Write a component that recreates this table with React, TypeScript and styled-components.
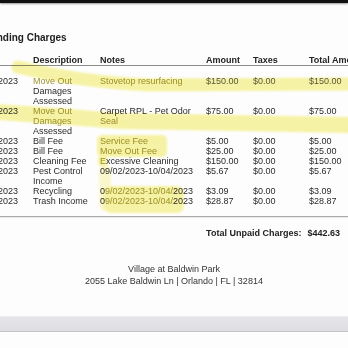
import React from "react";
import styled, { createGlobalStyle } from "styled-components";

type Charge = {
  date: string;
  desc: React.ReactNode;
  notes: React.ReactNode;
  amount: string;
  taxes: string;
  total: string;
  marked?: boolean;
};

const Mark = styled.span`
  color: #a09536;
`;

const charges: Charge[] = [
  {
    date: "10/10/2023",
    desc: (
      <>
        <Mark>Move Out</Mark> Damages Assessed
      </>
    ),
    notes: <Mark>Stovetop resurfacing</Mark>,
    amount: "$150.00",
    taxes: "$0.00",
    total: "$150.00",
    marked: true,
  },
  {
    date: "10/10/2023",
    desc: (
      <>
        <Mark>Move Out Damages</Mark> Assessed
      </>
    ),
    notes: (
      <>
        Carpet RPL - Pet Odor <Mark>Seal</Mark>
      </>
    ),
    amount: "$75.00",
    taxes: "$0.00",
    total: "$75.00",
  },
  { date: "10/10/2023", desc: "Bill Fee", notes: <Mark>Service Fee</Mark>, amount: "$5.00", taxes: "$0.00", total: "$5.00" },
  { date: "10/10/2023", desc: "Bill Fee", notes: <Mark>Move Out Fee</Mark>, amount: "$25.00", taxes: "$0.00", total: "$25.00" },
  {
    date: "10/10/2023",
    desc: "Cleaning Fee",
    notes: (
      <>
        <Mark>E</Mark>xcessive Cleaning
      </>
    ),
    amount: "$150.00",
    taxes: "$0.00",
    total: "$150.00",
  },
  { date: "10/10/2023", desc: "Pest Control Income", notes: "09/02/2023-10/04/2023", amount: "$5.67", taxes: "$0.00", total: "$5.67" },
  {
    date: "10/10/2023",
    desc: "Recycling",
    notes: (
      <>
        0<Mark>9/02/2023-10/04/</Mark>2023
      </>
    ),
    amount: "$3.09",
    taxes: "$0.00",
    total: "$3.09",
  },
  {
    date: "10/10/2023",
    desc: "Trash Income",
    notes: (
      <>
        0<Mark>9/02/2023-10/04/</Mark>2023
      </>
    ),
    amount: "$28.87",
    taxes: "$0.00",
    total: "$28.87",
  },
];

export default function App() {
  return (
    <>
      <GlobalStyle />
      <Screen>
        <TopEdge />
        <Sheet>
          <Title>Outstanding Charges</Title>
          <Table>
            <HeadRow>
              <span>Date</span>
              <span>Description</span>
              <span>Notes</span>
              <span>Amount</span>
              <span>Taxes</span>
              <span>Total Amount</span>
            </HeadRow>
            <Body>
              {charges.map((c, i) => (
                <Row key={i}>
                  <Cell>{c.date}</Cell>
                  <Cell>{c.desc}</Cell>
                  <Cell>{c.notes}</Cell>
                  <Cell $faded={c.marked}>{c.amount}</Cell>
                  <Cell $faded={c.marked}>{c.taxes}</Cell>
                  <Cell $faded={c.marked}>{c.total}</Cell>
                </Row>
              ))}
            </Body>
          </Table>
          <TotalRow>
            <span>Total Unpaid Charges:</span>
            <span>$442.63</span>
          </TotalRow>
        </Sheet>
        <Footer>
          <div>Village at Baldwin Park</div>
          <div>2055 Lake Baldwin Ln | Orlando | FL | 32814</div>
        </Footer>
        <Toolbar />
        {/* marker strokes drawn over the printout */}
        <Highlighter viewBox="0 0 348 348" width="348" height="348">
          <defs>
            <filter id="soft" x="-5%" y="-20%" width="110%" height="140%">
              <feGaussianBlur stdDeviation="1.2" />
            </filter>
          </defs>
          <g filter="url(#soft)">
            <g fill="none" stroke="#f8f4a6" strokeLinecap="round" strokeLinejoin="round">
              <path d="M 18 67 Q 80 82 150 85 L 350 84" strokeWidth="13" />
              <path d="M -2 112 Q 60 116 120 121 L 350 125" strokeWidth="16" />
            </g>
            <g fill="#f8f4a6">
              <rect x="97" y="135" width="70" height="22" rx="5" />
              <rect x="98" y="156" width="9" height="10" rx="3" />
              <rect x="104" y="186" width="80" height="27" rx="7" />
              <rect x="99" y="165" width="12" height="46" rx="6" opacity="0.55" />
            </g>
          </g>
        </Highlighter>
      </Screen>
    </>
  );
}

const GlobalStyle = createGlobalStyle`
  html, body {
    margin: 0;
    padding: 0;
    background: #fff;
  }
  body {
    font-family: "Liberation Sans", Arial, sans-serif;
    color: #2b2b2b;
  }
`;

const Screen = styled.div`
  position: relative;
  width: 348px;
  height: 348px;
  overflow: hidden;
  background: #fdfdfd;
  display: flex;
  flex-direction: column;
`;

const TopEdge = styled.div`
  height: 3px;
  background: #111;
  box-shadow: 0 1px 2px rgba(0, 0, 0, 0.4);
`;

const Sheet = styled.div`
  margin-left: -36px;
  width: 384px;
`;

const Title = styled.div`
  margin: 29px 0 0 1px;
  font-size: 10px;
  line-height: 12px;
  font-weight: 700;
  color: #222;
`;

const cols = "60px 67px 106px 47px 56px 1fr";

const Table = styled.div`
  margin-top: 11px;
  border-bottom: 1px solid #a9a9a9;
  box-shadow: 0 1px 1px rgba(0, 0, 0, 0.08);
`;

const HeadRow = styled.div`
  display: grid;
  grid-template-columns: ${cols};
  padding-left: 9px;
  font-size: 9px;
  line-height: 10px;
  font-weight: 700;
  color: #222;
  white-space: nowrap;
  border-bottom: 1px solid #8c8c8c;
`;

const Body = styled.div`
  padding: 10px 0 10px;
`;

const Row = styled.div`
  display: grid;
  grid-template-columns: ${cols};
  padding-left: 9px;
  font-size: 9px;
  line-height: 10px;
`;

const Cell = styled.div<{ $faded?: boolean }>`
  padding-right: 5px;
  color: ${(p) => (p.$faded ? "#5a5a4a" : "#2b2b2b")};
`;

const TotalRow = styled.div`
  display: flex;
  justify-content: flex-end;
  gap: 6px;
  padding-right: 8px;
  margin-top: 11px;
  font-size: 9px;
  line-height: 10px;
  font-weight: 700;
  color: #222;
`;

const Footer = styled.div`
  margin-top: 25px;
  text-align: center;
  font-size: 9px;
  line-height: 12px;
  color: #333;
`;

const Toolbar = styled.div`
  margin-top: 29px;
  height: 14px;
  border-top: 1px solid #ececf0;
  border-bottom: 1px solid #c4c4c8;
  background: linear-gradient(#e6e6ea, #dedee2);
`;

const Highlighter = styled.svg`
  position: absolute;
  left: 0;
  top: 0;
  pointer-events: none;
  mix-blend-mode: multiply;
`;
